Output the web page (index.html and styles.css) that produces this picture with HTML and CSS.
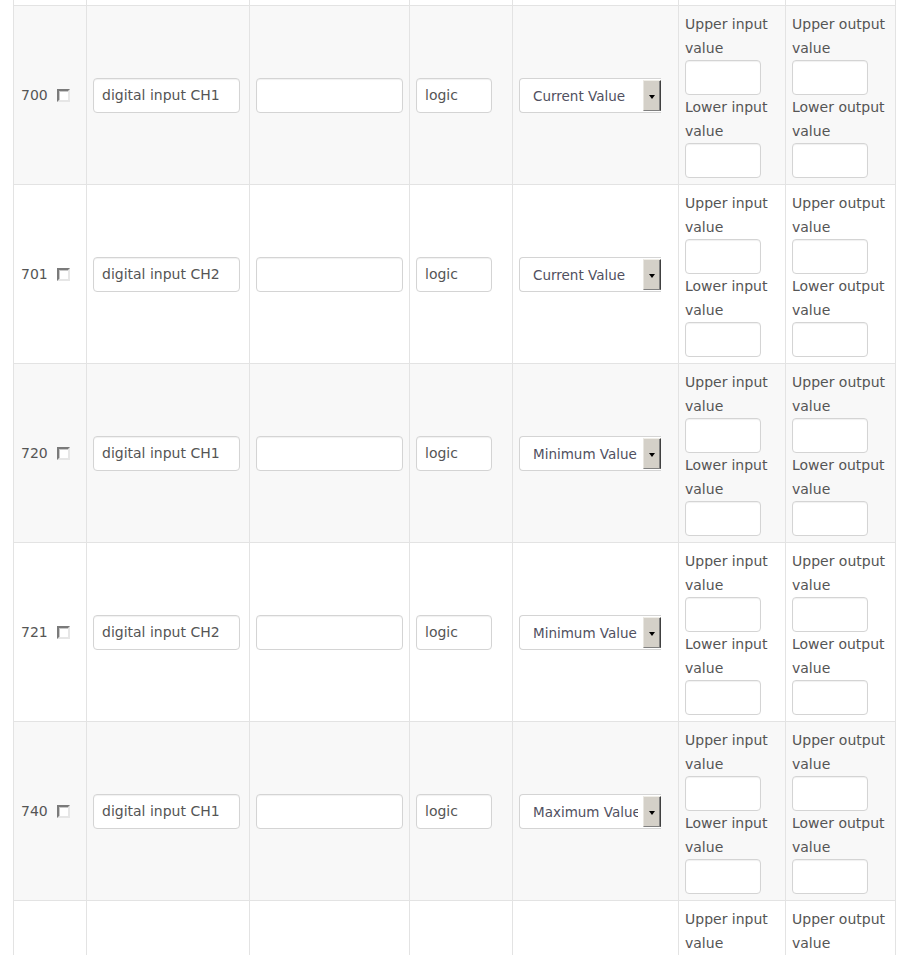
FILE: index.html
```html
<!DOCTYPE html>
<html lang="en">
<head>
    <meta charset="UTF-8">
    <title>Channel Mapping</title>
    <link rel="stylesheet" href="styles.css">
</head>
<body>
    <table class="grid">
        <colgroup>
            <col class="c-id">
            <col class="c-name">
            <col class="c-desc">
            <col class="c-unit">
            <col class="c-mode">
            <col class="c-in">
            <col class="c-out">
        </colgroup>
        <tbody>
            <!-- tail of the row above, scrolled out of view -->
            <tr class="stub">
                <td></td><td></td><td></td><td></td><td></td><td></td><td></td>
            </tr>
            <tr>
                <td class="id">700 <input type="checkbox" class="chk"></td>
                <td><input type="text" class="field f-name" value="digital input CH1"></td>
                <td><input type="text" class="field f-desc" value=""></td>
                <td><input type="text" class="field f-unit" value="logic"></td>
                <td><div class="pick"><span class="pick-text">Current Value</span><span class="pick-btn"></span></div></td>
                <td class="scale"><label>Upper input value</label><input type="text" class="field f-small"><label>Lower input value</label><input type="text" class="field f-small"></td>
                <td class="scale"><label>Upper output value</label><input type="text" class="field f-small"><label>Lower output value</label><input type="text" class="field f-small"></td>
            </tr>
            <tr>
                <td class="id">701 <input type="checkbox" class="chk"></td>
                <td><input type="text" class="field f-name" value="digital input CH2"></td>
                <td><input type="text" class="field f-desc" value=""></td>
                <td><input type="text" class="field f-unit" value="logic"></td>
                <td><div class="pick"><span class="pick-text">Current Value</span><span class="pick-btn"></span></div></td>
                <td class="scale"><label>Upper input value</label><input type="text" class="field f-small"><label>Lower input value</label><input type="text" class="field f-small"></td>
                <td class="scale"><label>Upper output value</label><input type="text" class="field f-small"><label>Lower output value</label><input type="text" class="field f-small"></td>
            </tr>
            <tr>
                <td class="id">720 <input type="checkbox" class="chk"></td>
                <td><input type="text" class="field f-name" value="digital input CH1"></td>
                <td><input type="text" class="field f-desc" value=""></td>
                <td><input type="text" class="field f-unit" value="logic"></td>
                <td><div class="pick"><span class="pick-text">Minimum Value</span><span class="pick-btn"></span></div></td>
                <td class="scale"><label>Upper input value</label><input type="text" class="field f-small"><label>Lower input value</label><input type="text" class="field f-small"></td>
                <td class="scale"><label>Upper output value</label><input type="text" class="field f-small"><label>Lower output value</label><input type="text" class="field f-small"></td>
            </tr>
            <tr>
                <td class="id">721 <input type="checkbox" class="chk"></td>
                <td><input type="text" class="field f-name" value="digital input CH2"></td>
                <td><input type="text" class="field f-desc" value=""></td>
                <td><input type="text" class="field f-unit" value="logic"></td>
                <td><div class="pick"><span class="pick-text">Minimum Value</span><span class="pick-btn"></span></div></td>
                <td class="scale"><label>Upper input value</label><input type="text" class="field f-small"><label>Lower input value</label><input type="text" class="field f-small"></td>
                <td class="scale"><label>Upper output value</label><input type="text" class="field f-small"><label>Lower output value</label><input type="text" class="field f-small"></td>
            </tr>
            <tr>
                <td class="id">740 <input type="checkbox" class="chk"></td>
                <td><input type="text" class="field f-name" value="digital input CH1"></td>
                <td><input type="text" class="field f-desc" value=""></td>
                <td><input type="text" class="field f-unit" value="logic"></td>
                <td><div class="pick"><span class="pick-text">Maximum Value</span><span class="pick-btn"></span></div></td>
                <td class="scale"><label>Upper input value</label><input type="text" class="field f-small"><label>Lower input value</label><input type="text" class="field f-small"></td>
                <td class="scale"><label>Upper output value</label><input type="text" class="field f-small"><label>Lower output value</label><input type="text" class="field f-small"></td>
            </tr>
            <tr>
                <td class="id">741 <input type="checkbox" class="chk"></td>
                <td><input type="text" class="field f-name" value="digital input CH2"></td>
                <td><input type="text" class="field f-desc" value=""></td>
                <td><input type="text" class="field f-unit" value="logic"></td>
                <td><div class="pick"><span class="pick-text">Maximum Value</span><span class="pick-btn"></span></div></td>
                <td class="scale"><label>Upper input value</label><input type="text" class="field f-small"><label>Lower input value</label><input type="text" class="field f-small"></td>
                <td class="scale"><label>Upper output value</label><input type="text" class="field f-small"><label>Lower output value</label><input type="text" class="field f-small"></td>
            </tr>
        </tbody>
    </table>
</body>
</html>
```

FILE: styles.css
```css
body {
    margin: 0;
    background: #fff;
    font-family: "DejaVu Sans", Verdana, sans-serif;
    font-size: 14px;
    color: #555;
}
.grid {
    border-collapse: collapse;
    table-layout: fixed;
    margin-left: 13px;
    width: 883px;
}
.c-id { width: 73px; }
.c-name { width: 163px; }
.c-desc { width: 160px; }
.c-unit { width: 103px; }
.c-mode { width: 166px; }
.c-in { width: 107px; }
.c-out { width: 110px; }

.grid td {
    border: 1px solid #e3e3e3;
    padding: 6px;
    vertical-align: middle;
}
.grid tr:nth-child(even) td {
    background: #f8f8f8;
}
.grid .stub td {
    height: 5px;
    padding: 0;
    border-top: 0;
    background: #fff;
}
.grid td.id {
    padding-left: 7px;
    white-space: nowrap;
}

/* old style sunken checkbox */
.chk {
    appearance: none;
    -webkit-appearance: none;
    width: 13px;
    height: 13px;
    margin: 0 0 0 5px;
    vertical-align: -2px;
    background: #fff;
    border: 2px solid;
    border-color: #7a7a7a #e6e6e6 #e6e6e6 #7a7a7a;
    box-shadow: inset 1px 1px 0 #c8c8c8;
}

.field {
    display: block;
    box-sizing: border-box;
    height: 35px;
    padding: 0 8px;
    border: 1px solid #d4d4d4;
    border-radius: 4px;
    background: #fff;
    box-shadow: inset 0 1px 1px rgba(0, 0, 0, 0.06);
    font-family: inherit;
    font-size: 14px;
    color: #555;
    outline: none;
}
.f-name { width: 147px; }
.f-desc { width: 147px; }
.f-unit { width: 76px; }
.f-small { width: 76px; }

.pick {
    display: flex;
    box-sizing: border-box;
    width: 142px;
    height: 35px;
    border: 1px solid #d4d4d4;
    border-right: none;
    border-radius: 4px 0 0 4px;
    background: #fff;
    overflow: hidden;
}
.pick-text {
    flex: 1;
    min-width: 0;
    overflow: hidden;
    white-space: nowrap;
    padding-left: 13px;
    margin-right: 5px;
    line-height: 34px;
    font-size: 13.5px;
    color: #505060;
}
.pick-btn {
    position: relative;
    flex: none;
    box-sizing: border-box;
    width: 18px;
    margin: 1px 0;
    background: #d4d0c8;
    border: 1px solid;
    border-color: #f0eee8 #404040 #808080 #e8e6e0;
    box-shadow: inset -1px 0 0 #808080;
}
.pick-btn::after {
    content: "";
    position: absolute;
    left: 5px;
    top: 14px;
    border-left: 3px solid transparent;
    border-right: 3px solid transparent;
    border-top: 4px solid #000;
}

.scale label {
    display: block;
    line-height: 24px;
}
```
